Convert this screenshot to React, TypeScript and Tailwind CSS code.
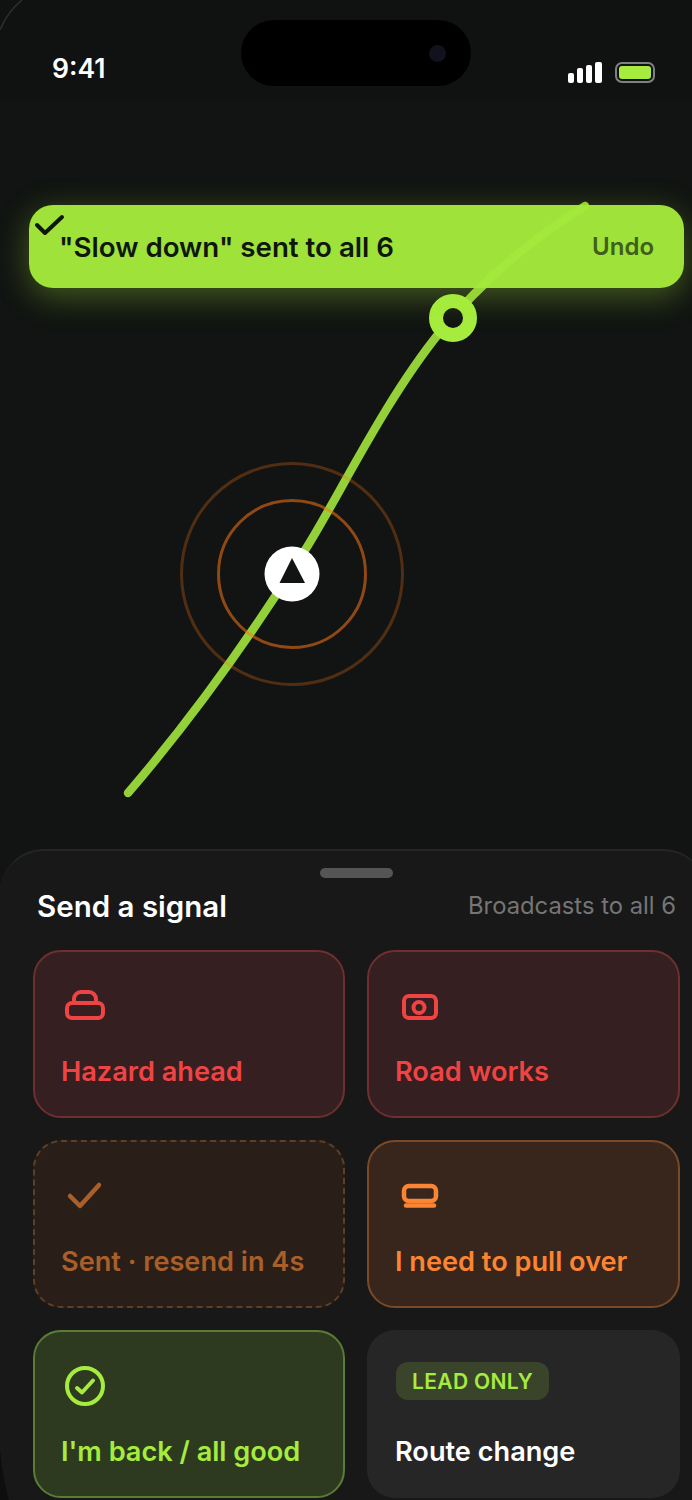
import React from "react";

const Signal = () => (
  <div className="flex items-end gap-[3px] h-[21px]">
    <div className="w-[6px] h-[10px] bg-white rounded-[2px]" />
    <div className="w-[6px] h-[15px] bg-white rounded-[2px]" />
    <div className="w-[6px] h-[18px] bg-white rounded-[2px]" />
    <div className="w-[7px] h-[21px] bg-white rounded-[2px]" />
  </div>
);

const Battery = () => (
  <div className="w-[40px] h-[21px] rounded-[7px] border-2 border-[#808080] p-[2px]">
    <div className="w-full h-full rounded-[3px] bg-[#a6ec3e]" />
  </div>
);

type CardProps = {
  className: string;
  labelClass: string;
  label: string;
  children: React.ReactNode;
};

const Card = ({ className, labelClass, label, children }: CardProps) => (
  <div className={`h-[168px] rounded-[28px] border-2 px-[26px] pt-[30px] ${className}`}>
    <div className="h-[40px] pl-[1px] flex items-end">{children}</div>
    <div className={`mt-[34px] text-[27.15px] leading-[32px] font-semibold whitespace-nowrap ${labelClass}`}>{label}</div>
  </div>
);

const Icon = ({ color, children }: { color: string; children: React.ReactNode }) => (
  <svg width="46" height="34" viewBox="0 0 46 34" fill="none" stroke={color} strokeWidth="4" strokeLinecap="round" strokeLinejoin="round">
    {children}
  </svg>
);

export default function App() {
  return (
    <div className="relative w-[692px] h-[1500px] overflow-hidden bg-[#111412] flex flex-col font-['Inter',sans-serif]">
      {/* status bar */}
      <div className="relative h-[100px] shrink-0 bg-[#101211] flex items-start justify-between pl-[52px] pr-[37px]">
        <span className="mt-[51px] text-[26.5px] leading-[34px] font-semibold text-white">9:41</span>
        <div className="absolute left-[241px] top-[20px] w-[230px] h-[66px] rounded-full bg-black flex items-center justify-end pr-[25px]">
          <div className="w-[17px] h-[17px] rounded-full bg-[#12121e]" />
        </div>
        <div className="mt-[62px] flex items-center gap-[13px]">
          <Signal />
          <Battery />
        </div>
      </div>

      {/* map */}
      <div className="relative flex-1 min-h-0">
        <svg className="absolute left-0 top-0" width="692" height="749" viewBox="0 100 692 749" fill="none">
          <path
            d="M128 793 C195 715 255 630 307 547 C340 494 385 400 440 332 C480 283 530 240 585 206"
            stroke="#a6ec3e"
            strokeOpacity="0.88"
            strokeWidth="8.5"
            strokeLinecap="round"
          />
          <circle cx="292" cy="574" r="110.5" stroke="#f97316" strokeOpacity="0.28" strokeWidth="3" />
          <circle cx="292" cy="574" r="73.5" stroke="#f97316" strokeOpacity="0.55" strokeWidth="3" />
          <circle cx="292" cy="574" r="27.5" fill="#ffffff" />
          <path d="M292 558 L305 583 H279.5 Z" fill="#111412" />
          <circle cx="453" cy="318" r="17" fill="#111412" stroke="#a6ec3e" strokeWidth="14" />
        </svg>

        <div className="absolute left-[29px] top-[105px] w-[655px] h-[83px] rounded-[24px] bg-[#a3e93c]/[0.97] shadow-[0_8px_32px_rgba(163,230,53,0.35)] flex items-center justify-between pl-[30px] pr-[30px]">
          <svg className="absolute left-[4px] top-[7px]" width="32" height="26" viewBox="0 0 32 26" fill="none" stroke="#0f170a" strokeWidth="4" strokeLinecap="round" strokeLinejoin="round">
            <path d="M4 13 L12 21 L29 5" />
          </svg>
          <span className="text-[27.7px] leading-[34px] font-semibold text-[#0f170a]">"Slow down" sent to all 6</span>
          <span className="text-[24px] leading-[32px] font-semibold text-[#3f5f1a]">Undo</span>
        </div>
      </div>

      {/* sheet */}
      <div className="relative w-[707px] h-[651px] shrink-0 rounded-t-[44px] bg-[#181818] border-t-2 border-[#252525] pl-[33px] pr-[27px] flex flex-col">
        <div className="mt-[17px] self-center w-[73px] h-[10px] mr-[1px] rounded-full bg-[#555555]" />
        <div className="mt-[10px] mb-[1px] flex items-center justify-between pl-[4px] pr-[4px] h-[36px]">
          <span className="text-[29.5px] leading-[36px] font-semibold text-white">Send a signal</span>
          <span className="text-[23.8px] leading-[32px] text-[#757575]">Broadcasts to all 6</span>
        </div>
        <div className="mt-[25px] grid grid-cols-[312px_313px] gap-[22px]">
          <Card className="bg-[#351f21] border-[#6f2f31]" labelClass="text-[#ef4444]" label="Hazard ahead">
            <Icon color="#ef4444">
              <rect x="5" y="15" width="36" height="15" rx="5" />
              <path d="M12 15 V11 A7 7 0 0 1 19 4 H27 A7 7 0 0 1 34 11 V15" />
            </Icon>
          </Card>
          <Card className="bg-[#351f21] border-[#6f2f31]" labelClass="text-[#ef4444]" label="Road works">
            <Icon color="#ef4444">
              <rect x="8" y="8" width="32" height="22" rx="5" />
              <circle cx="23" cy="19.5" r="5.5" />
            </Icon>
          </Card>
          <Card className="bg-[#2a1e18] border-dashed border-[#5f3f25]" labelClass="text-[#a85f2a]" label="Sent · resend in 4s">
            <Icon color="#a85f2a">
              <path d="M8 18 L18 28 L37 7" strokeWidth="4.5" />
            </Icon>
          </Card>
          <Card className="bg-[#38261c] border-[#7a4a27]" labelClass="text-[#fb8532]" label="I need to pull over">
            <Icon color="#fb8532">
              <rect x="8" y="8" width="32" height="15" rx="5" strokeWidth="4.5" />
              <path d="M10 27.5 H38" strokeWidth="4.5" />
            </Icon>
          </Card>
          <Card className="bg-[#2d3a20] border-[#5a7d35]" labelClass="text-[#a6ec3e]" label="I'm back / all good">
            <svg className="-mb-[4px]" width="46" height="40" viewBox="0 0 46 40" fill="none" stroke="#a6ec3e" strokeWidth="4" strokeLinecap="round" strokeLinejoin="round">
              <circle cx="23" cy="20" r="18" />
              <path d="M15 22 L20 26.5 L31 14.5" />
            </svg>
          </Card>
          <Card className="bg-[#262626] border-transparent" labelClass="text-white" label="Route change">
            <div className="self-start h-[38px] pt-[2px] px-[16px] rounded-[12px] bg-[#39442b] flex items-center text-[21px] font-semibold tracking-[0.35px] text-[#a6ec3e] whitespace-nowrap">
              LEAD ONLY
            </div>
          </Card>
        </div>
      </div>

      {/* phone frame edges */}
      <svg className="absolute left-0 top-0 pointer-events-none" width="40" height="40" viewBox="0 0 40 40" fill="none">
        <path d="M0 30 C5 18 12 8 22 0" stroke="#2e2e2e" strokeWidth="1.5" />
      </svg>
      <svg className="absolute left-0 bottom-0 pointer-events-none" width="12" height="50" viewBox="0 0 12 50">
        <path d="M0 0 C2 20 5 36 9 50 L0 50 Z" fill="#0e0e0e" />
      </svg>
    </div>
  );
}
